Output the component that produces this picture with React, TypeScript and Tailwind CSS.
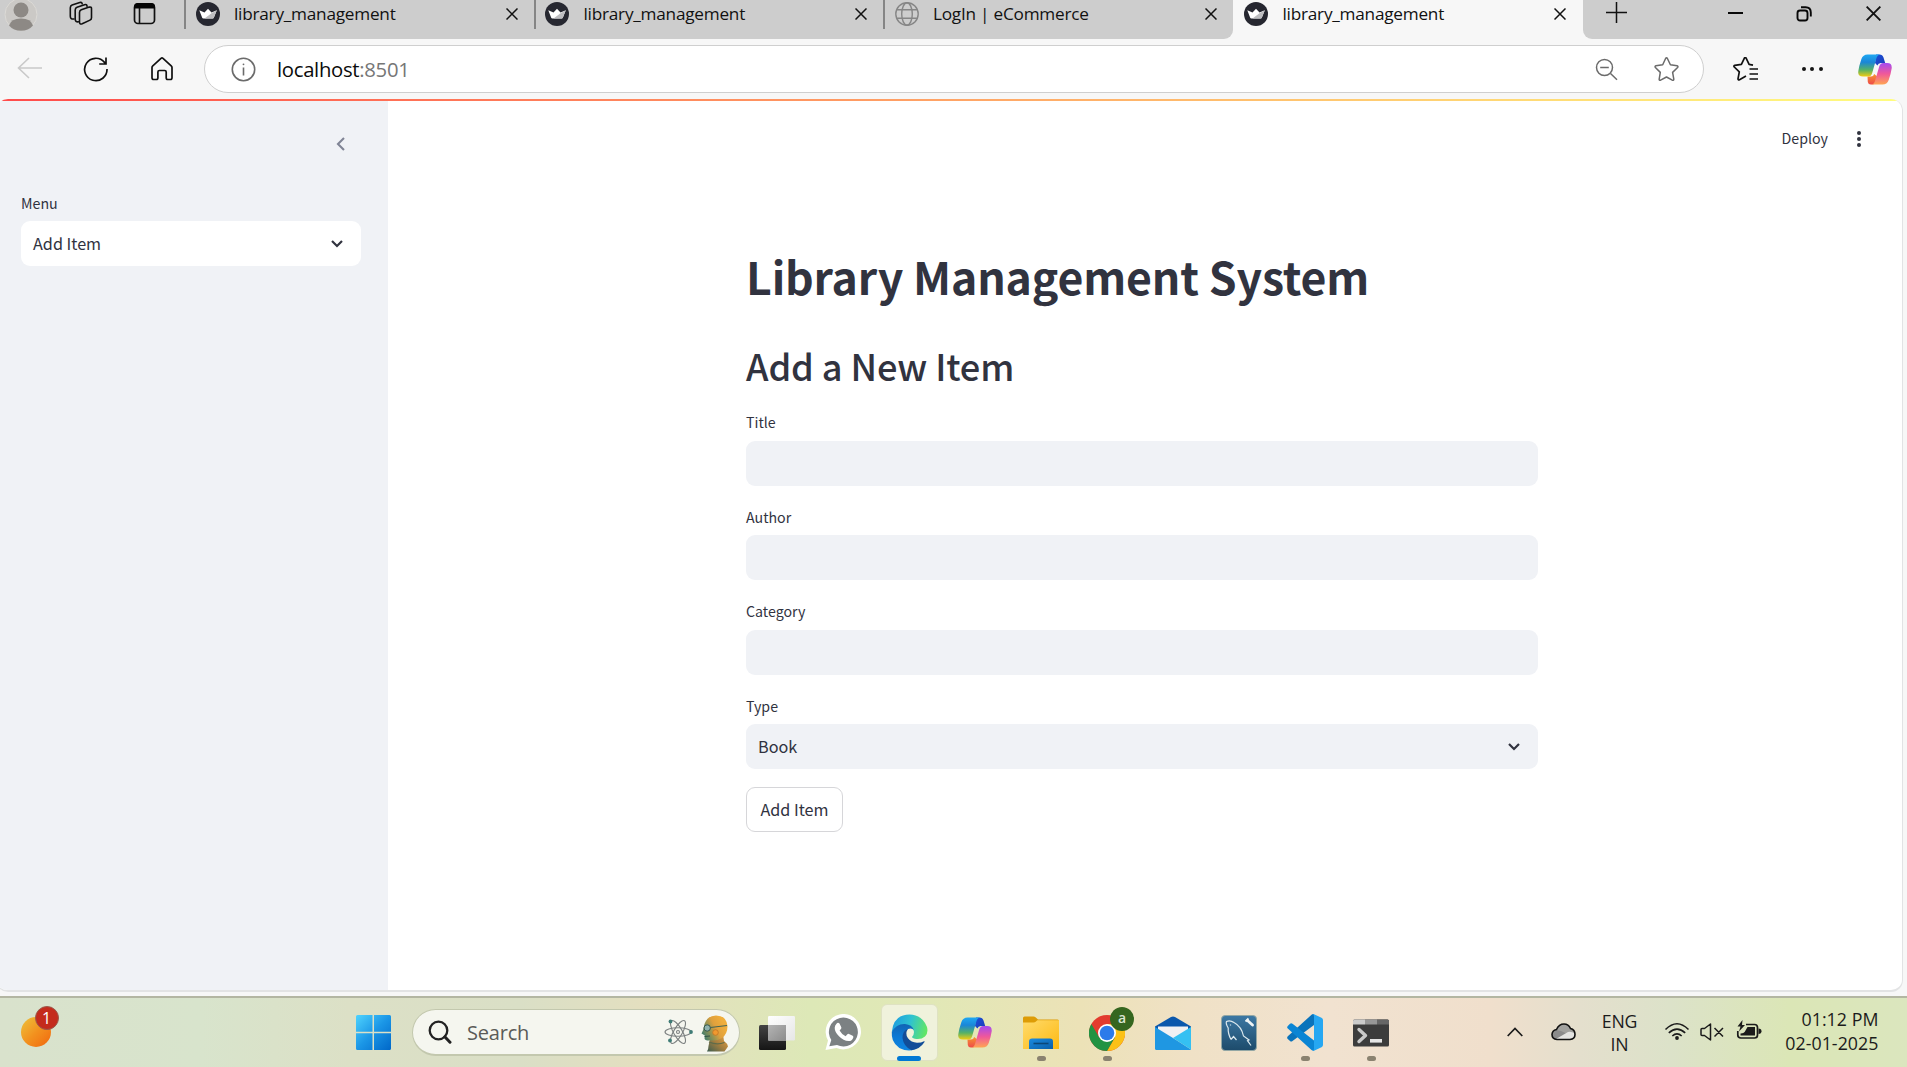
import type { ReactNode } from 'react';

const SEGOE = "font-['Open_Sans','Noto_Sans',sans-serif]";
const SOURCE = "font-['Noto_Sans_CJK_SC',sans-serif]";

function CloseIcon({ size = 12, weight = 1.5 }: { size?: number; weight?: number }) {
  return (
    <svg width={size} height={size} viewBox="0 0 12 12" fill="none" stroke="#111" strokeWidth={weight}>
      <path d="M.5.5l11 11M11.5.5l-11 11" />
    </svg>
  );
}

function CrownIcon() {
  return (
    <svg width="24" height="24" viewBox="0 0 24 24">
      <circle cx="12" cy="12" r="12" fill="#262730" />
      <path d="M3.3 8.200l5.200 2.300L12 6.800l3.500 3.700 5.300-2.300-3 7.600q-.3.800-1.100.8H7.300q-.8 0-1.100-.8z" fill="#fff" />
      <path d="M20.800 8.200l-3 7.600q-.3.800-1.100.8H8.500l7-5.400z" fill="#bdbdc0" />
    </svg>
  );
}

function GlobeIcon() {
  return (
    <svg width="24" height="24" viewBox="0 0 24 24" fill="none" stroke="#868686" strokeWidth="1.4">
      <circle cx="12" cy="12" r="11.200" />
      <ellipse cx="12" cy="12" rx="5.300" ry="11.200" />
      <path d="M2 7.800h20M2 16.200h20" />
    </svg>
  );
}

function Tab({ title, icon, active, divider }: { title: string; icon: ReactNode; active?: boolean; divider?: boolean }) {
  return (
    <div className={active ? 'flex h-[39px] w-[350.5px] bg-[#f7f7f7]' : 'flex h-[39px] w-[349.5px] bg-[#cdcdcd]'}>
      <div className={divider ? 'h-[29px] w-[2px] bg-[#858585]' : 'h-[29px] w-[2px]'} />
      <div className={active ? 'flex h-[28px] flex-1 items-center pl-[9.5px] pr-[17px]' : 'flex h-[28px] flex-1 items-center pl-[9.5px] pr-[16px]'}>
        {icon}
        <span className="ml-[14.5px] flex-1 whitespace-nowrap text-[17.200px] leading-[28px] tracking-[-0.23px] text-[#111]">{title}</span>
        <CloseIcon />
      </div>
    </div>
  );
}

function TabStrip() {
  return (
    <div className="flex h-[39px] bg-[#f7f7f7]">
      <div className="flex h-[39px] w-[184px] shrink-0 bg-[#cdcdcd]">
        <svg className="-mt-[2px] ml-[4px]" width="34" height="34" viewBox="0 0 34 34">
          <circle cx="17" cy="16.500" r="16" fill="#cbc9c6" stroke="#dcdad6" strokeWidth="1" />
          <circle cx="17" cy="12" r="7.500" fill="#8d8985" />
          <path d="M5 27.500q2-7 12-7t12 7q-4.500 5.300-12 5.300t-12-5.300z" fill="#8d8985" />
        </svg>
        <svg className="ml-[30px] mt-[1px]" width="25" height="26" viewBox="0 0 25 26" fill="none" stroke="#111" strokeWidth="1.600" strokeLinejoin="round" strokeLinecap="round">
          <path d="M11.500 11.500q0-2 1.800-2.700l8-2.700q2.200-.5 2.200 1.500v9.200q0 1.700-1.500 2.300l-7.800 3.700q-2.700.9-2.700-1.800z" />
          <path d="M10.500 20.800q-3.300.4-3.300-2.800V9q0-2 1.800-2.700l7.500-2.600q2.300-.6 2.600 1.600" />
          <path d="M6 18q-3.700.5-3.700-2.700V6.700q0-2 1.800-2.700l7.700-2.500q2-.5 2.400 1.300" />
        </svg>
        <svg className="ml-[39.5px] mt-[2px]" width="23" height="23" viewBox="0 0 23 23">
          <rect x="1.500" y="2" width="20" height="19.500" rx="3.500" fill="none" stroke="#111" strokeWidth="1.700" />
          <path d="M1 6.500v-2Q1 1 4.500 1h14q3.500 0 3.500 3.500v2z" fill="#050505" />
          <path d="M6.500 6v15" stroke="#111" strokeWidth="1.600" />
        </svg>
      </div>
      <Tab title="library_management" icon={<CrownIcon />} divider />
      <Tab title="library_management" icon={<CrownIcon />} divider />
      <div className="overflow-hidden rounded-br-[9px]">
        <Tab title="LogIn | eCommerce" icon={<GlobeIcon />} divider />
      </div>
      <Tab title="library_management" icon={<CrownIcon />} active />
      <div className="flex h-[39px] flex-1 items-start rounded-bl-[9px] bg-[#cdcdcd]">
        <svg className="ml-[22.5px] mt-[2px]" width="21" height="21" viewBox="0 0 21 21" stroke="#111" strokeWidth="1.500">
          <path d="M10.500 0v21M0 10.500h21" />
        </svg>
        <div className="ml-[101px] mt-[12px] h-[2px] w-[15px] bg-[#080808]" />
        <svg className="ml-[53px] mt-[5px]" width="16" height="17" viewBox="0 0 16 17" fill="none" stroke="#080808" strokeWidth="1.900">
          <rect x="1.500" y="5.500" width="10" height="10" rx="2.500" />
          <path d="M5 2.200h4.500q5.300 0 5.300 5.300v4" />
        </svg>
        <div className="ml-[54px] mt-[6px]">
          <CloseIcon size={15} weight={1.5} />
        </div>
      </div>
    </div>
  );
}

function CopilotIcon() {
  return (
    <svg width="34" height="31" viewBox="0 0 34 31">
      <defs>
        <linearGradient id="cpA" x1="0" y1="0" x2="0" y2="1">
          <stop offset="0" stopColor="#1fa8f2" />
          <stop offset=".35" stopColor="#1a86d8" />
          <stop offset=".7" stopColor="#56b266" />
          <stop offset="1" stopColor="#f2cc12" />
        </linearGradient>
        <linearGradient id="cpB" x1="0" y1="0" x2="0" y2="1">
          <stop offset="0" stopColor="#a44af0" />
          <stop offset=".5" stopColor="#f0589a" />
          <stop offset="1" stopColor="#ffa552" />
        </linearGradient>
        <linearGradient id="cpC" x1="0" y1="0" x2="1" y2="1">
          <stop offset="0" stopColor="#1a50d8" />
          <stop offset="1" stopColor="#1d3cb8" />
        </linearGradient>
        <linearGradient id="cpD" x1="0" y1="0" x2="0" y2="1">
          <stop offset="0" stopColor="#f7952f" />
          <stop offset="1" stopColor="#ee4a4a" />
        </linearGradient>
      </defs>
      <path d="M18 .5h3.500q3 0 4 3l1.700 5.500h-4.500q-2.500 0-3.300 2.500L17 9z" fill="url(#cpC)" />
      <path d="M9.500 22.500h3.500q2.500 0 3.200-2.500l3.600 3-1.500 4.500q-1 3-4 3h-1.500q-2.500 0-3-2.500z" fill="url(#cpD)" />
      <path d="M9.500.5h13q-3 .2-4 3.500l-4.300 15q-1 3.500-4 3.500H5q-5.500 0-4.700-5.300Q1 12 3.400 5 5 .5 9.500.5z" fill="url(#cpA)" />
      <path d="M24.500 30.500h-12q3.500 0 4.500-3.500l4.200-14.500Q22.200 9 25.200 9h4q5 0 4.500 5.300Q33 19.500 30.700 26q-1.600 4.500-6.200 4.500z" fill="url(#cpB)" />
    </svg>
  );
}

function Toolbar() {
  return (
    <div className="flex h-[60px] items-start bg-[#f7f7f7]">
      <svg className="ml-[17px] mt-[18px]" width="25" height="22" viewBox="0 0 25 22" fill="none" stroke="#c9c9c9" strokeWidth="1.600">
        <path d="M12 1L1.500 11 12 21M1.500 11H25" />
      </svg>
      <svg className="ml-[41px] mt-[17px]" width="26" height="27" viewBox="0 0 26 27" fill="none" stroke="#111" strokeWidth="1.700">
        <path d="M24 13A11.200 11.200 0 1 1 21.500 6.400L22.500 7.500M23 1.500V8H16.200" />
      </svg>
      <svg className="ml-[41px] mt-[17px]" width="24" height="26" viewBox="0 0 24 26" fill="none" stroke="#111" strokeWidth="1.700" strokeLinejoin="round">
        <path d="M2 11.500q0-1 .8-1.700L11 2.300q1-.8 2 0l8.200 7.500q.8.700.8 1.700v10.300q0 1.700-1.700 1.700h-2.500q-1.600 0-1.600-1.700V16q0-1.500-1.500-1.500H9.400q-1.500 0-1.500 1.500v5.800q0 1.700-1.600 1.700H3.800q-1.800 0-1.800-1.700z" />
      </svg>
      <div className="ml-[30px] mt-[6px] flex h-[48px] w-[1500px] items-center rounded-full border-[1.5px] border-[#cfcfcf] bg-white pl-[25.5px]">
        <svg width="25" height="25" viewBox="0 0 25 25" fill="none" stroke="#6b6b6b" strokeWidth="1.600">
          <circle cx="12.500" cy="12.500" r="11.200" />
          <path d="M12.500 10.500v8" />
          <circle cx="12.500" cy="7.300" r=".9" fill="#6b6b6b" stroke="none" />
        </svg>
        <span className="ml-[21.5px] flex-1 text-[20.300px] leading-[44px] tracking-[-0.3px] text-[#0b0b0b]">
          localhost<span className="text-[#767676]">:8501</span>
        </span>
        <svg width="23" height="23" viewBox="0 0 23 23" fill="none" stroke="#6b6b6b" strokeWidth="1.500">
          <circle cx="9.500" cy="9.500" r="8" />
          <path d="M5.200 9.500h8.600M15.500 15.500l6.500 6.200" />
        </svg>
        <svg className="ml-[36px] mr-[24px]" width="25" height="24" viewBox="0 0 25 24" fill="none" stroke="#6b6b6b" strokeWidth="1.500" strokeLinejoin="round">
          <path d="M11.600 1.500q.9-1.400 1.800 0l3 6.300 6.700 1q1.400.4.500 1.700l-5 4.900 1.200 6.800q0 1.600-1.500 1l-5.800-3.200-5.900 3.200q-1.500.5-1.400-1l1.100-6.800-4.900-4.900q-.9-1.300.5-1.700l6.800-1z" />
        </svg>
      </div>
      <svg className="ml-[29px] mt-[18px]" width="26" height="25" viewBox="0 0 26 25" fill="none" stroke="#111" strokeWidth="1.700" strokeLinejoin="round">
        <path d="M20 8.600l-3.900-.7-3-6.300q-.8-1.300-1.700 0l-3 6.300-6.700 1q-1.300.4-.4 1.600l5 4.900-1.300 6.900q0 1.400 1.500.9l6.500-3.700M16.500 12.500H25M16.500 17.500H25M16.500 22.500H25" transform="translate(0 -.5)" />
      </svg>
      <div className="ml-[42.5px] mt-[28px] flex gap-[4.500px]">
        <div className="size-[4px] rounded-full bg-[#151515]" />
        <div className="size-[4px] rounded-full bg-[#151515]" />
        <div className="size-[4px] rounded-full bg-[#151515]" />
      </div>
      <div className="ml-[35.5px] mt-[15px]">
        <CopilotIcon />
      </div>
    </div>
  );
}

function Chevron() {
  return (
    <svg width="12" height="8" viewBox="0 0 12 8" fill="none" stroke="#31333f" strokeWidth="2.200">
      <path d="M1 1l5 5 5-5" />
    </svg>
  );
}

function FieldLabel({ children }: { children: ReactNode }) {
  return <div className="h-[31.5px] text-[14.200px] leading-[27px] text-[#31333f]">{children}</div>;
}

function Sidebar() {
  return (
    <aside className="flex w-[392px] shrink-0 flex-col bg-[#f0f2f6] pl-[25px] pr-[27px]">
      <div className="flex h-[88.500px] justify-end pr-[16.500px] pt-[36px]">
        <svg width="9" height="14" viewBox="0 0 9 14" fill="none" stroke="#808495" strokeWidth="2.100">
          <path d="M8 1L2 7l6 6" />
        </svg>
      </div>
      <FieldLabel>Menu</FieldLabel>
      <div className="flex h-[45px] items-center justify-between rounded-[9px] bg-white pl-[12px] pr-[18px] text-[16.200px] text-[#31333f]">
        Add Item
        <Chevron />
      </div>
    </aside>
  );
}

function TextField({ label }: { label: string }) {
  return (
    <div>
      <FieldLabel>{label}</FieldLabel>
      <div className="h-[45px] rounded-[9px] bg-[#f0f2f6]" />
    </div>
  );
}

function MainPanel() {
  return (
    <main className="flex flex-1 flex-col">
      <div className="flex h-[76px] items-center justify-end pr-[41px] text-[14.200px] text-[#31333f]">
        Deploy
        <div className="ml-[29px] flex flex-col gap-[2px]">
          <div className="size-[4px] rounded-full bg-[#31333f]" />
          <div className="size-[4px] rounded-full bg-[#31333f]" />
          <div className="size-[4px] rounded-full bg-[#31333f]" />
        </div>
      </div>
      <div className="ml-[358px] flex w-[792px] flex-col text-[#31333f]">
        <h1 className="mt-[69px] h-[60px] whitespace-nowrap text-[44.600px] font-bold leading-[60px] tracking-[-0.15px]">Library Management System</h1>
        <h2 className="mt-[35px] h-[48px] whitespace-nowrap text-[36.200px] font-medium leading-[48px] tracking-[-0.12px]">Add a New Item</h2>
        <div className="mt-[20px] flex flex-col gap-[18px]">
          <TextField label="Title" />
          <TextField label="Author" />
          <TextField label="Category" />
          <div>
            <FieldLabel>Type</FieldLabel>
            <div className="flex h-[45px] items-center justify-between rounded-[9px] bg-[#f0f2f6] pl-[12px] pr-[18px] text-[16.200px]">
              Book
              <Chevron />
            </div>
          </div>
          <button className="h-[45px] w-[97px] rounded-[9px] border border-[#d6d6d9] bg-white text-[16.200px]">Add Item</button>
        </div>
      </div>
    </main>
  );
}

function TaskCell({ children, running }: { children: ReactNode; running?: boolean }) {
  return (
    <div className="relative flex h-[69px] w-[66px] items-center justify-center">
      {children}
      {running && <div className="absolute bottom-[6px] left-[28.5px] h-[5px] w-[9px] rounded-full bg-[#8a8270]" />}
    </div>
  );
}

function WindowsLogo() {
  return (
    <svg width="35" height="35" viewBox="0 0 35 35">
      <defs>
        <linearGradient id="win" x1="0" y1="0" x2="1" y2="1">
          <stop offset="0" stopColor="#4fd3fd" />
          <stop offset=".5" stopColor="#1b96e6" />
          <stop offset="1" stopColor="#0067c8" />
        </linearGradient>
      </defs>
      <path d="M1.500 0H16.500V16.800H0V1.500Q0 0 1.500 0zM18 0h15.500Q35 0 35 1.500v15.300H18zM0 18.200h16.500V35h-15Q0 35 0 33.500zM18 18.200h17v15.300q0 1.500-1.500 1.500H18z" fill="url(#win)" />
    </svg>
  );
}

function SearchBox() {
  return (
    <div className="ml-[21px] flex h-[47px] w-[328px] items-center rounded-full border border-b-2 border-[#c3c8ae] bg-[#f5f6ef] pl-[15px]">
      <svg width="24" height="24" viewBox="0 0 24 24" fill="none" stroke="#222" strokeWidth="2.300">
        <circle cx="10.500" cy="10.500" r="8.800" />
        <path d="M16.800 16.800l5.200 5.400" strokeWidth="3" strokeLinecap="round" />
      </svg>
      <span className="ml-[15px] flex-1 pt-[1px] text-[20px] tracking-[-0.2px] text-[#5a5b57]">Search</span>
      <svg width="30" height="28" viewBox="0 0 30 28" fill="none" stroke="#7c8080" strokeWidth="1.100">
        <ellipse cx="15" cy="14" rx="13" ry="4.300" />
        <ellipse cx="15" cy="14" rx="13" ry="4.300" transform="rotate(60 15 14)" />
        <ellipse cx="15" cy="14" rx="13" ry="4.300" transform="rotate(120 15 14)" />
        <circle cx="15" cy="14" r="1.500" />
        <circle cx="7.500" cy="3.500" r="1.900" fill="#3f7c76" stroke="none" />
        <circle cx="28" cy="14" r="1.900" fill="#3f7c76" stroke="none" />
        <circle cx="7" cy="22.500" r="1.900" fill="#3f7c76" stroke="none" />
      </svg>
      <svg className="ml-[6px] mr-[10px] mt-[3px]" width="30" height="37" viewBox="0 0 30 37">
        <defs>
          <linearGradient id="head" x1="0" y1=".6" x2=".8" y2=".2">
            <stop offset="0" stopColor="#4e8068" />
            <stop offset=".35" stopColor="#9c9550" />
            <stop offset=".6" stopColor="#e0a03c" />
            <stop offset="1" stopColor="#f0ae3c" />
          </linearGradient>
          <linearGradient id="neck" x1="0" y1="1" x2="1" y2="0">
            <stop offset="0" stopColor="#3a5c50" />
            <stop offset=".5" stopColor="#a8803f" />
            <stop offset="1" stopColor="#f0a545" />
          </linearGradient>
        </defs>
        <path d="M11 24q8 1 13-5l1 7q3.500 2.500 4 5.500l-3.500 5H8q1.500-2.500 1.500-5.500z" fill="url(#neck)" />
        <path d="M10 27q8 3.500 15.500.5" fill="none" stroke="#5f6b4a" strokeWidth="1.300" />
        <path d="M5.500 9Q8.500.5 17 .5q10.500 0 11.500 10.500 0 8-5.500 12-5 3-11.500 2.500-5.500.5-6-2l.3-3L2.500 18.500q1.800-3 3-9.500z" fill="url(#head)" />
        <path d="M11.500 12.500L28 10.500" stroke="#426354" strokeWidth="1" />
        <circle cx="8.200" cy="13" r="3.200" fill="#8fb3ae" stroke="#35564c" strokeWidth="1" />
        <circle cx="16.500" cy="17.500" r="2.800" fill="#f0992f" stroke="#c27424" strokeWidth=".8" />
        <path d="M5.500 21.500l5.500-.5" stroke="#2f5145" strokeWidth="1" />
      </svg>
    </div>
  );
}

function TaskViewIcon() {
  return (
    <svg width="36" height="36" viewBox="0 0 36 36">
      <defs>
        <linearGradient id="tvDark" x1="0" y1="0" x2="0" y2="1">
          <stop offset="0" stopColor="#444" />
          <stop offset="1" stopColor="#151515" />
        </linearGradient>
        <linearGradient id="tvLight" x1="0" y1="0" x2="1" y2="1">
          <stop offset="0" stopColor="#fff" />
          <stop offset="1" stopColor="#e6e6e6" />
        </linearGradient>
        <linearGradient id="tvMix" x1="0" y1="0" x2="1" y2="1">
          <stop offset="0" stopColor="#b4b4b4" />
          <stop offset="1" stopColor="#8c8c8c" />
        </linearGradient>
      </defs>
      <rect x="0" y="10" width="27" height="25" rx="1.500" fill="url(#tvDark)" />
      <rect x="9" y="1" width="27" height="24.500" rx="1.200" fill="url(#tvLight)" />
      <rect x="9" y="10" width="18" height="15.500" fill="url(#tvMix)" />
    </svg>
  );
}

function WhatsAppIcon() {
  return (
    <svg width="37" height="37" viewBox="0 0 37 37">
      <path d="M.5 36L3 26.500A17.700 17.700 0 1 1 11.500 34z" fill="#fff" />
      <path d="M4.300 32.300L6.300 26A14.500 14.500 0 1 1 12 31z" fill="#7c8183" />
      <path d="M11.500 9.700q1.300-1.600 3-.3l1.800 3.900q.3 1-.4 1.700l-1.300 1.500q2 3.800 6 5.700l1.800-2q.7-.7 1.600-.3l3.700 1.800q.9.500.6 1.700-1 3.500-4.700 3.700-5.200-.2-9.600-4.800-4.500-4.700-4.300-8.600.2-2.500 1.800-4z" fill="#fff" />
    </svg>
  );
}

function EdgeIcon() {
  return (
    <svg width="37" height="37" viewBox="0 0 37 37">
      <defs>
        <linearGradient id="edgeTop" x1="0" y1=".3" x2="1" y2=".5">
          <stop offset="0" stopColor="#1c9de0" />
          <stop offset=".5" stopColor="#2fc2d0" />
          <stop offset="1" stopColor="#62e664" />
        </linearGradient>
        <linearGradient id="edgeLeft" x1="0" y1="0" x2="0" y2="1">
          <stop offset="0" stopColor="#1264b4" />
          <stop offset=".5" stopColor="#0b7ad6" />
          <stop offset="1" stopColor="#0f84e0" />
        </linearGradient>
      </defs>
      <path d="M.8 18Q2.500.5 18.500.5q13 .5 17.500 12.500 1.500 6-2 9.500-3.500 3-8.500 2.500-4-.3-4.500-2 2-2 2-5-.5-5-6.500-6.500Q6 10.500.8 18z" fill="url(#edgeTop)" />
      <path d="M.8 18Q5.500 9.500 14 10q7 .7 9 6-2.500-2.500-6-1-4.500 3-2.500 9 3 7 11.500 7.300l2 1.200Q23.500 36.500 18 36.500 6 36 1.800 26 .5 22 .8 18z" fill="url(#edgeLeft)" />
      <path d="M17 15q-5.500 1.500-5.500 9 1 8.500 9 12.200 8.500-1 13-8.200.5-1-.5-.8-3 1.600-7 1.500-6-.5-9-4.500-3.500-5 0-9.200z" fill="#114d98" />
    </svg>
  );
}

function FolderIcon() {
  return (
    <svg width="36" height="34" viewBox="0 0 36 34">
      <defs>
        <linearGradient id="fold" x1="0" y1="0" x2="1" y2="1">
          <stop offset="0" stopColor="#ffdb6b" />
          <stop offset="1" stopColor="#fdb912" />
        </linearGradient>
        <linearGradient id="foldBlue" x1="0" y1="0" x2="1" y2="1">
          <stop offset="0" stopColor="#1b8be0" />
          <stop offset="1" stopColor="#0a5ea8" />
        </linearGradient>
      </defs>
      <path d="M0 2Q0 .5 1.500.5h9q1.200 0 2 .8l2.500 2.200h19.500Q36 3.500 36 5v6H0z" fill="#dd9c06" />
      <path d="M0 6.500h10.500q1.500 0 2.500-1l1.300-1.200H36V33H0z" fill="url(#fold)" />
      <path d="M6 33v-7.500q0-3 3-3h18q3 0 3 3V33z" fill="url(#foldBlue)" />
      <path d="M10.500 27.500h15" stroke="#0b4778" strokeWidth="1.600" />
    </svg>
  );
}

function ChromeIcon() {
  return (
    <svg width="36" height="36" viewBox="0 0 36 36">
      <circle cx="18" cy="18" r="18" fill="#e23b2e" />
      <path d="M18 9h15.600A18 18 0 0 1 18 36l7.800-13.500z" fill="#fbc116" />
      <path d="M2.400 9A18 18 0 0 0 18 36l7.800-13.500-15.600 0z" fill="#229342" />
      <circle cx="18" cy="18" r="9" fill="#fff" />
      <circle cx="18" cy="18" r="7.300" fill="#2c7bea" />
    </svg>
  );
}

function MailIcon() {
  return (
    <svg width="36" height="34" viewBox="0 0 36 34">
      <path d="M0 10.500L16 1q2-1 4 0l16 9.500v3H0z" fill="#0a57ac" />
      <path d="M3 10.500h30v6L18 25 3 16.500z" fill="#f1f1f3" />
      <path d="M0 11l18 11L36 33.500q-.5.500-1.500.5h-33Q0 34 0 32.500z" fill="#1f97e2" />
      <path d="M18 22L36 11v22.500z" fill="#35c0f2" />
    </svg>
  );
}

function MySqlIcon() {
  return (
    <svg width="36" height="36" viewBox="0 0 36 36">
      <defs>
        <linearGradient id="sql" x1="0" y1="0" x2="0" y2="1">
          <stop offset="0" stopColor="#3d78a4" />
          <stop offset="1" stopColor="#1d4b6b" />
        </linearGradient>
      </defs>
      <rect x=".5" y=".5" width="35" height="35" rx="3.500" fill="url(#sql)" stroke="#93a7a5" />
      <path d="M10 24.500q-3.200-6-2.800-11.500Q4.500 8.500 5.500 6.500 9 4.700 13 7.500q7.500 4 9.500 13.500l5.500 4-1.500.7 3.500 4.800M10 24.500l2.500-3 3 3.500M9.500 9.500v1" fill="none" stroke="#dbe8ee" strokeWidth="1.200" />
      <path d="M26.500 5.500l5 4.500" stroke="#eef3f5" strokeWidth="2.800" strokeLinecap="round" />
      <path d="M24.500 6.500l3-3M31 10.500l1-1" stroke="#eef3f5" strokeWidth="1.800" />
    </svg>
  );
}

function VsCodeIcon() {
  return (
    <svg width="36" height="37" viewBox="0 0 36 37">
      <path d="M27 1v10L5.500 27q-1.300 1-2.500 0L.8 25q-1.300-1.400 0-2.700L24.500.8q1-1 2.500-.6z" fill="#0a73bb" />
      <path d="M27 36.500v-10L5.500 9.800q-1.300-1-2.500 0L.8 12q-1.300 1.300 0 2.600L24.500 36q1 1 2.500.8z" fill="#0b85d4" />
      <path d="M25.500.4L27 .3l7.500 3.500Q36 4.600 36 6v25q0 1.400-1.500 2.200L27 36.700l-1.500-.3 1.500-1V1.500z" fill="#26a7f2" />
    </svg>
  );
}

function TerminalIcon() {
  return (
    <svg width="36" height="28" viewBox="0 0 36 28">
      <rect x="0" y=".5" width="36" height="27" rx="1.500" fill="#3c3c3c" />
      <path d="M1.500.5H12v5H0V2Q0 .5 1.500.5z" fill="#cbcbcb" />
      <path d="M12 .5h12v5H12z" fill="#979797" />
      <path d="M24 .5h10.500Q36 .5 36 2v3.500H24z" fill="#666" />
      <path d="M6 10.500l6.500 6L6 22.500" fill="none" stroke="#c9c9c9" strokeWidth="3.400" strokeLinecap="round" strokeLinejoin="round" />
      <rect x="17" y="20" width="12" height="3.600" fill="#e5e5e5" />
    </svg>
  );
}

function SystemTray() {
  return (
    <div className="flex h-[69px] items-center text-[#1b1b1b]">
      <svg className="-mt-[1px] ml-[102.5px]" width="16" height="10" viewBox="0 0 16 10" fill="none" stroke="#1b1b1b" strokeWidth="1.700">
        <path d="M.7 9L8 1.500 15.300 9" />
      </svg>
      <svg className="-mt-[1px] ml-[28px]" width="25" height="18" viewBox="0 0 25 18">
        <path d="M6 16.500Q1 16 1 11.500 1.200 7.500 5.500 6.500 8 1 13 1q4.500 0 6.500 4.500 4.500 1 4.500 6 0 4.500-5 5z" fill="#a1a19e" />
        <path d="M1 12l4-5 5 1 11 5-8 3H6q-4.500-.5-5-4z" fill="#8b8b8b" />
        <path d="M5 16l12-7q3-1 7 1.500.5 5.500-5 6H6z" fill="#e4e4e2" />
        <path d="M6 16.500Q1 16 1 11.500 1.200 7.500 5.500 6.500 8 1 13 1q4.500 0 6.500 4.500 4.500 1 4.500 6 0 4.500-5 5z" fill="none" stroke="#111" strokeWidth="1.600" />
      </svg>
      <div className="ml-[22px] w-[44px] text-center text-[17.700px] leading-[23px] tracking-[-0.2px]">
        ENG
        <br />
        IN
      </div>
      <svg className="-mt-[2px] ml-[22px]" width="26" height="19" viewBox="0 0 26 19" fill="none" stroke="#1b1b1b" strokeWidth="1.600">
        <path d="M1.500 7.500Q13-4 24.500 7.500M4.800 10.800q8.200-7.500 16.400 0M8.300 14q4.700-4.200 9.400 0" />
        <circle cx="13" cy="16" r="1.900" fill="#1b1b1b" stroke="none" />
      </svg>
      <svg className="-mt-[1px] ml-[10.500px]" width="24" height="18" viewBox="0 0 24 18" fill="none" stroke="#1b1b1b" strokeWidth="1.500" strokeLinejoin="round">
        <path d="M1 6.500q0-1 1-1h2.500L10.500 1v16l-6-4.500H2q-1 0-1-1zM14.500 5l8.500 8.500M23 5l-8.500 8.500" />
      </svg>
      <svg className="-mt-[5px] ml-[11.500px]" width="26" height="20" viewBox="0 0 26 20" fill="none" stroke="#1b1b1b" strokeWidth="1.700">
        <path d="M10 4.500h8.500q3 0 3 3V15q0 3-3 3H4.800q-3 0-3-3v-4" />
        <path d="M11.500 7H19v8.500H4.500v-2q4 0 5-3z" fill="#1b1b1b" stroke="none" />
        <path d="M22.500 8.500q3 .2 3 2.700t-3 2.700z" fill="#1b1b1b" stroke="none" />
        <path d="M6.500 0L1.500 6.500h3L3 11.500 9 5H6z" fill="#1b1b1b" stroke="none" />
      </svg>
      <div className="-mt-[3px] ml-[15px] w-[102px] whitespace-nowrap text-right text-[17.800px] leading-[24px] tracking-[0.05px]">
        01:12 PM
        <br />
        02-01-2025
      </div>
    </div>
  );
}

function Taskbar() {
  return (
    <div className={`${SEGOE} flex h-[71px] items-center border-t-2 border-[#b3b6a2] bg-[linear-gradient(90deg,#d9e2cc_0px,#d8e4cc_200px,#dce0c6_350px,#dadfc6_520px,#e4dfbf_650px,#dde8b7_810px,#e1e8b6_930px,#ece2b7_1080px,#f0e1c6_1190px,#f1e2d0_1330px,#f0dfcc_1490px,#e4dfcd_1580px,#dce2c9_1670px,#dbe6b6_1790px,#dbe6be_1907px)]`}>
      <div className="relative ml-[21px] -mt-[1px] size-[30px] rounded-full bg-linear-to-br from-[#ecc23a] via-[#f2921f] to-[#f0640c]">
        <div className="absolute -top-[11px] left-[13.500px] flex size-[24px] items-center justify-center rounded-full border border-[#9a5a4c] bg-[#c42b1c] text-[16px] leading-none text-white">1</div>
      </div>
      <div className="ml-[305px]">
        <WindowsLogo />
      </div>
      <SearchBox />
      <div className="ml-[4px] flex">
        <TaskCell><TaskViewIcon /></TaskCell>
        <TaskCell><WhatsAppIcon /></TaskCell>
        <TaskCell>
          <div className="relative flex size-[57px] items-center justify-center rounded-[6px] border border-[#dfe2c2] bg-[#f0f2dc]">
            <EdgeIcon />
            <div className="absolute -bottom-[1px] left-[15.500px] h-[5px] w-[24px] rounded-full bg-[#0078d4]" />
          </div>
        </TaskCell>
        <TaskCell><CopilotIcon /></TaskCell>
        <TaskCell running><FolderIcon /></TaskCell>
        <TaskCell running>
          <ChromeIcon />
          <div className="absolute left-[36px] top-[9px] flex size-[24px] items-center justify-center rounded-full bg-[#35661f] pb-[2px] text-[14px] font-semibold leading-none text-[#dbe5d3]">a</div>
        </TaskCell>
        <TaskCell><MailIcon /></TaskCell>
        <TaskCell><MySqlIcon /></TaskCell>
        <TaskCell running><VsCodeIcon /></TaskCell>
        <TaskCell running><TerminalIcon /></TaskCell>
      </div>
      <SystemTray />
    </div>
  );
}

export default function App() {
  return (
    <div className="flex h-[1067px] w-[1907px] flex-col overflow-hidden bg-[#f7f7f7]">
      <div className={SEGOE}>
        <TabStrip />
        <Toolbar />
      </div>
      <div className="-ml-[4px] h-[897px] pr-[4px]">
        <div className={`${SOURCE} flex h-[893px] flex-col overflow-hidden rounded-[12px] border-b-[2px] border-r border-[#e2e3e4] bg-white`}>
          <div className="h-[2px] shrink-0 bg-[linear-gradient(90deg,#ff4b4b,#fffd80)]" />
          <div className="flex flex-1">
            <Sidebar />
            <MainPanel />
          </div>
        </div>
      </div>
      <Taskbar />
    </div>
  );
}
